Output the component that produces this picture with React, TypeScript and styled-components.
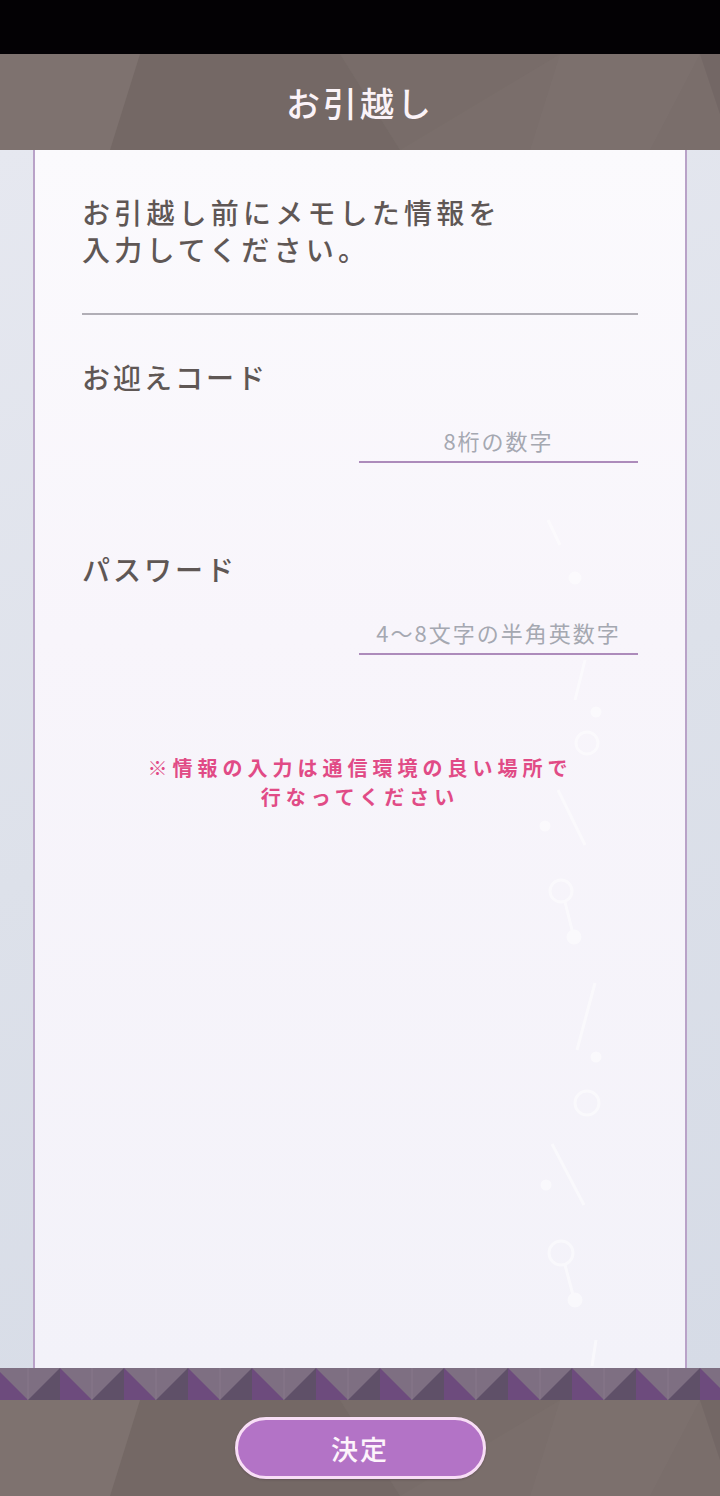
import React from 'react';
import styled, { createGlobalStyle } from 'styled-components';

const GlobalStyle = createGlobalStyle`
    html, body {
        margin: 0;
        padding: 0;
        background: #000;
    }
    * {
        box-sizing: border-box;
    }
    body {
        font-family: "Noto Sans CJK JP", "Noto Sans", sans-serif;
    }
`;

const Root = styled.div`
    width: 720px;
    height: 1496px;
    display: flex;
    flex-direction: column;
    overflow: hidden;
`;

const StatusBar = styled.div`
    height: 54px;
    background-color: #030104;
`;

// 茶色の多角形っぽい帯（ヘッダーとフッター共通）
const BrownBand = styled.div<{ $height: number }>`
    position: relative;
    height: ${(p) => p.$height}px;
    background-color: #7a6e6b;
    display: flex;
    align-items: center;
    justify-content: center;
    overflow: hidden;
`;

const BandShade = styled.svg`
    position: absolute;
    inset: 0;
    width: 100%;
    height: 100%;
`;

const Title = styled.h1`
    position: relative;
    margin: 0;
    color: #fbf3f8;
    font-size: 34px;
    font-weight: 500;
    letter-spacing: 3px;
`;

const Body = styled.div`
    flex: 1;
    display: flex;
    background: linear-gradient(160deg, #e6e8f0 0%, #dde1ea 50%, #d6dbe6 100%);
    padding: 0 33px;
`;

const Card = styled.div`
    position: relative;
    flex: 1;
    border-left: 2px solid #b9a2c8;
    border-right: 2px solid #b9a2c8;
    background: linear-gradient(180deg, #fbfafd 0%, #f8f5fb 40%, #f3f2f9 100%);
    padding: 44px 47px 0;
`;

// 背景の飾り（カード全体に重ねる、座標はページ基準）
const Deco = styled.svg`
    position: absolute;
    left: 0;
    top: 0;
    width: 650px;
    height: 1218px;
    pointer-events: none;
`;

const Content = styled.div`
    position: relative;
`;

const Intro = styled.p`
    margin: 0;
    color: #5f5755;
    font-size: 28px;
    font-weight: 500;
    line-height: 37px;
    letter-spacing: 4.2px;
`;

const Divider = styled.hr`
    margin: 45px 0 0;
    border: none;
    height: 2px;
    background-color: #b1aeb6;
`;

const Label = styled.div<{ $top: number }>`
    margin-top: ${(p) => p.$top}px;
    color: #5f5755;
    font-size: 28px;
    font-weight: 500;
    line-height: 36px;
    letter-spacing: 3px;
`;

const FieldInput = styled.input`
    display: block;
    width: 279px;
    margin: 30px 0 0 auto;
    padding: 0 0 6px;
    border: none;
    border-bottom: 2px solid #ad8bbb;
    background: transparent;
    font-family: inherit;
    font-size: 22px;
    line-height: 30px;
    height: 38px;
    letter-spacing: 2px;
    text-align: center;
    color: #5f5755;
    outline: none;

    &::placeholder {
        color: #a5a8b1;
        opacity: 1;
    }
`;

const Note = styled.p`
    margin: 98px 0 0;
    text-align: center;
    color: #e14b86;
    font-size: 20px;
    font-weight: 700;
    line-height: 29px;
    letter-spacing: 5px;
`;

const TriangleStrip = styled.svg`
    display: block;
    width: 720px;
    height: 32px;
`;

const SubmitButton = styled.button`
    position: relative;
    width: 251px;
    height: 62px;
    border-radius: 31px;
    border: 3px solid #f8def6;
    background-color: #b373c6;
    color: #fdf4fb;
    font-family: inherit;
    font-size: 27px;
    font-weight: 500;
    letter-spacing: 2px;
    box-shadow: 0 1px 2px rgba(60, 40, 50, 0.3);
`;

const Shade = () => (
    <BandShade viewBox="0 0 720 96" preserveAspectRatio="none">
        <polygon points="140,0 340,0 400,96 110,96" fill="#6f6461" opacity="0.55" />
        <polygon points="0,0 140,0 110,96 0,96" fill="#817572" opacity="0.6" />
        <polygon points="340,0 560,0 400,96" fill="#776b68" opacity="0.6" />
        <polygon points="560,0 700,0 650,96 530,96" fill="#7e7270" opacity="0.5" />
        <polygon points="700,0 720,0 720,60" fill="#6e6360" opacity="0.6" />
    </BandShade>
);

const Triangles = () => {
    const items = [];
    for (let i = -1; i < 12; i++) {
        const cx = 60 + i * 64;
        items.push(
            <g key={i}>
                <polygon points={`${cx},0 ${cx},32 ${cx - 32},32`} fill="#5f5068" />
                <polygon points={`${cx},0 ${cx + 32},32 ${cx},32`} fill="#6d4b7d" />
                <line x1={cx + 32} y1="0" x2={cx + 32} y2="32" stroke="#8f8092" strokeWidth="1" opacity="0.6" />
            </g>
        );
    }
    return (
        <TriangleStrip viewBox="0 0 720 32">
            <rect x="0" y="0" width="720" height="32" fill="#7e6f82" />
            {items}
        </TriangleStrip>
    );
};

const Decoration = () => (
    <Deco viewBox="35 150 650 1218" fill="none" stroke="#ffffff" strokeWidth="3" opacity="0.5">
        <line x1="548" y1="520" x2="560" y2="545" />
        <circle cx="575" cy="578" r="5" fill="#ffffff" />
        <line x1="585" y1="660" x2="575" y2="700" />
        <circle cx="596" cy="712" r="4" fill="#ffffff" />
        <circle cx="587" cy="743" r="11" />
        <line x1="558" y1="790" x2="585" y2="845" />
        <circle cx="545" cy="826" r="4" fill="#ffffff" />
        <circle cx="561" cy="891" r="11" />
        <line x1="565" y1="902" x2="572" y2="930" />
        <circle cx="574" cy="937" r="6" fill="#ffffff" />
        <line x1="595" y1="983" x2="577" y2="1050" />
        <circle cx="596" cy="1057" r="4" fill="#ffffff" />
        <circle cx="587" cy="1103" r="12" />
        <line x1="552" y1="1144" x2="584" y2="1205" />
        <circle cx="546" cy="1185" r="4" fill="#ffffff" />
        <circle cx="561" cy="1253" r="12" />
        <line x1="565" y1="1265" x2="573" y2="1295" />
        <circle cx="575" cy="1300" r="6" fill="#ffffff" />
        <line x1="596" y1="1340" x2="592" y2="1366" />
    </Deco>
);

const App = () => {
    return (
        <Root>
            <GlobalStyle />
            <StatusBar />
            <BrownBand $height={96}>
                <Shade />
                <Title>お引越し</Title>
            </BrownBand>
            <Body>
                <Card>
                    <Decoration />
                    <Content>
                        <Intro>
                            お引越し前にメモした情報を
                            <br />
                            入力してください。
                        </Intro>
                        <Divider />
                        <Label $top={44}>お迎えコード</Label>
                        <FieldInput placeholder="8桁の数字" />
                        <Label $top={88}>パスワード</Label>
                        <FieldInput placeholder="4〜8文字の半角英数字" />
                        <Note>
                            ※情報の入力は通信環境の良い場所で
                            <br />
                            行なってください
                        </Note>
                    </Content>
                </Card>
            </Body>
            <Triangles />
            <BrownBand $height={96}>
                <Shade />
                <SubmitButton>決定</SubmitButton>
            </BrownBand>
        </Root>
    );
};

export default App;
